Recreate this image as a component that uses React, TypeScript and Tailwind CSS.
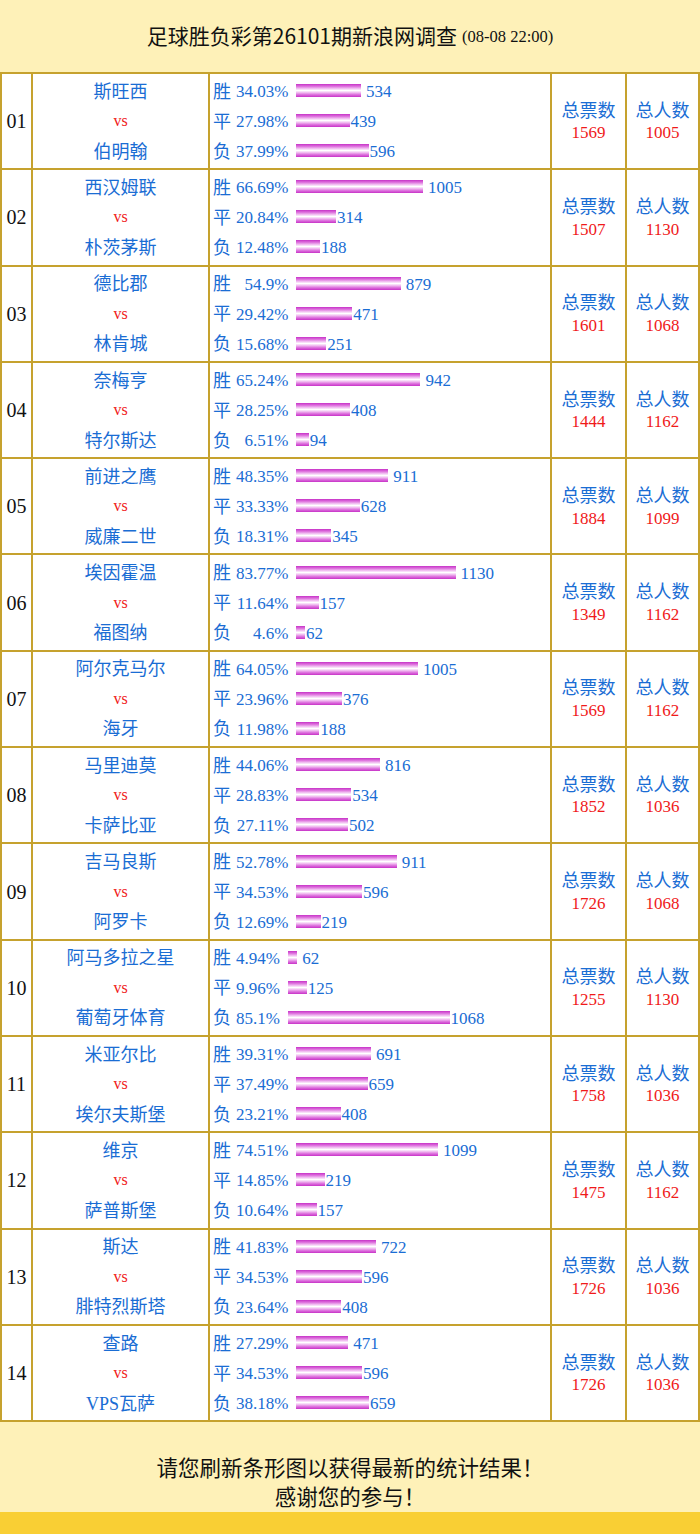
import React from "react";

type Line = [string, number];
type Match = {
  no: string;
  home: string;
  away: string;
  lines: [Line, Line, Line];
  votes: number;
  people: number;
};

const matches: Match[] = [
  { no: "01", home: "斯旺西", away: "伯明翰", lines: [["34.03%", 534], ["27.98%", 439], ["37.99%", 596]], votes: 1569, people: 1005 },
  { no: "02", home: "西汉姆联", away: "朴茨茅斯", lines: [["66.69%", 1005], ["20.84%", 314], ["12.48%", 188]], votes: 1507, people: 1130 },
  { no: "03", home: "德比郡", away: "林肯城", lines: [["54.9%", 879], ["29.42%", 471], ["15.68%", 251]], votes: 1601, people: 1068 },
  { no: "04", home: "奈梅亨", away: "特尔斯达", lines: [["65.24%", 942], ["28.25%", 408], ["6.51%", 94]], votes: 1444, people: 1162 },
  { no: "05", home: "前进之鹰", away: "威廉二世", lines: [["48.35%", 911], ["33.33%", 628], ["18.31%", 345]], votes: 1884, people: 1099 },
  { no: "06", home: "埃因霍温", away: "福图纳", lines: [["83.77%", 1130], ["11.64%", 157], ["4.6%", 62]], votes: 1349, people: 1162 },
  { no: "07", home: "阿尔克马尔", away: "海牙", lines: [["64.05%", 1005], ["23.96%", 376], ["11.98%", 188]], votes: 1569, people: 1162 },
  { no: "08", home: "马里迪莫", away: "卡萨比亚", lines: [["44.06%", 816], ["28.83%", 534], ["27.11%", 502]], votes: 1852, people: 1036 },
  { no: "09", home: "吉马良斯", away: "阿罗卡", lines: [["52.78%", 911], ["34.53%", 596], ["12.69%", 219]], votes: 1726, people: 1068 },
  { no: "10", home: "阿马多拉之星", away: "葡萄牙体育", lines: [["4.94%", 62], ["9.96%", 125], ["85.1%", 1068]], votes: 1255, people: 1130 },
  { no: "11", home: "米亚尔比", away: "埃尔夫斯堡", lines: [["39.31%", 691], ["37.49%", 659], ["23.21%", 408]], votes: 1758, people: 1036 },
  { no: "12", home: "维京", away: "萨普斯堡", lines: [["74.51%", 1099], ["14.85%", 219], ["10.64%", 157]], votes: 1475, people: 1162 },
  { no: "13", home: "斯达", away: "腓特烈斯塔", lines: [["41.83%", 722], ["34.53%", 596], ["23.64%", 408]], votes: 1726, people: 1036 },
  { no: "14", home: "查路", away: "VPS瓦萨", lines: [["27.29%", 471], ["34.53%", 596], ["38.18%", 659]], votes: 1726, people: 1036 },
];

const labels = ["胜", "平", "负"];

function Bars({ lines }: { lines: Match["lines"] }) {
  return (
    <div className="grid grid-cols-[auto_auto_1fr] auto-rows-[30px] items-center">
      {lines.map(([pct, count], i) => (
        <React.Fragment key={i}>
          <span className="text-[18px] leading-none text-[#1a6dd4]">{labels[i]}</span>
          <span className="pl-[5px] text-right text-[17px] leading-none text-[#1a6dd4]">{pct}</span>
          <span className="flex items-center pl-[8px]">
            <span
              className="block h-[13px] -translate-y-[1px] bg-[linear-gradient(to_bottom,#c732c7_0%,#dd70dd_18%,#f2c4f2_36%,#ffffff_50%,#f2c4f2_64%,#dd70dd_82%,#c732c7_100%)]"
              style={{ width: `${(parseFloat(pct) * 1.9).toFixed(1)}px` }}
            />
            <span className={`text-[17px] leading-none text-[#1a6dd4] ${i === 0 ? "ml-[5px]" : "ml-[1px]"}`}>{count}</span>
          </span>
        </React.Fragment>
      ))}
    </div>
  );
}

export default function App() {
  return (
    <div className="w-[700px] font-['Liberation_Serif','Noto_Sans_CJK_SC',serif]">
      <div className="flex h-[72px] items-center justify-center bg-[#fef1b8] pb-[1px] text-[#111]">
        <span className="font-['Noto_Sans_CJK_SC',sans-serif] text-[21px]">足球胜负彩第26101期新浪网调查</span>
        <span className="ml-[5px] pt-[3px] text-[16.5px]">(08-08 22:00)</span>
      </div>

      <div className="grid grid-cols-[29px_175px_340px_73px_71px] auto-rows-[94.3px] gap-[2px] bg-[#c6a22e] p-[2px]">
        {matches.map((m) => (
          <React.Fragment key={m.no}>
            <div className="flex items-center justify-center bg-white text-[20px] text-[#111]">{m.no}</div>
            <div className="flex flex-col items-center justify-center bg-white pt-[2px]">
              <div className="flex h-[30px] items-center text-[18px] text-[#1a6dd4]">{m.home}</div>
              <div className="flex h-[30px] items-center pb-[2px] text-[16px] text-[#f01a1a]">vs</div>
              <div className="flex h-[30px] items-center text-[18px] text-[#1a6dd4]">{m.away}</div>
            </div>
            <div className="flex items-center bg-white pl-[3px] pt-[1px]">
              <Bars lines={m.lines} />
            </div>
            <div className="flex flex-col items-center justify-center bg-white pt-[2px]">
              <div className="flex h-[22px] items-center text-[18px] text-[#1a6dd4]">总票数</div>
              <div className="flex h-[22px] items-center text-[17px] text-[#f01a1a]">{m.votes}</div>
            </div>
            <div className="flex flex-col items-center justify-center bg-white pt-[2px]">
              <div className="flex h-[22px] items-center text-[18px] text-[#1a6dd4]">总人数</div>
              <div className="flex h-[22px] items-center text-[17px] text-[#f01a1a]">{m.people}</div>
            </div>
          </React.Fragment>
        ))}
      </div>

      <div className="flex h-[90px] flex-col items-center bg-[#fef1b8] pt-[30px] font-['Noto_Sans_CJK_SC',sans-serif] text-[21.5px] leading-[29px] text-[#111]">
        <div>请您刷新条形图以获得最新的统计结果！</div>
        <div>感谢您的参与！</div>
      </div>
      <div className="h-[22px] bg-[#f9cf34]" />
    </div>
  );
}
